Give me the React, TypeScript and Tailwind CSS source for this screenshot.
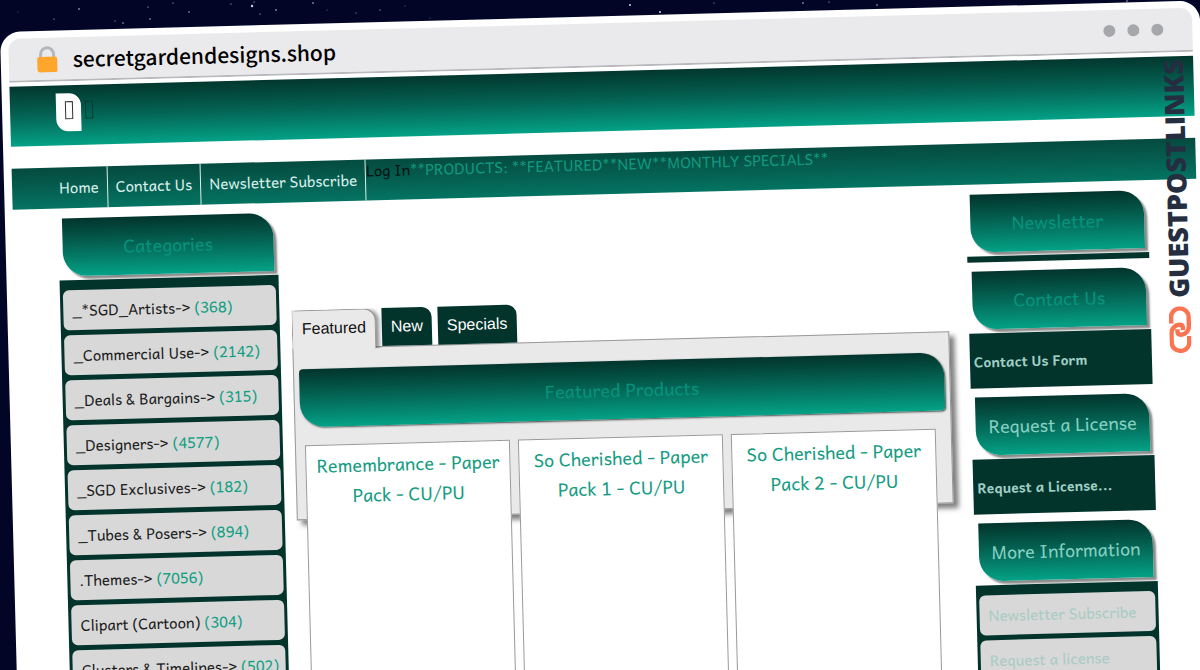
import React from "react";

const banner =
  "flex items-center justify-center bg-linear-to-b from-[#02342c] via-[#046857] to-[#03a287]";
const leafBox = `${banner} h-[58px] rounded-tr-3xl rounded-bl-3xl text-lg shadow-[3px_3px_2px_rgba(60,60,60,0.6)]`;

const categories: [string, number][] = [
  ["_*SGD_Artists->", 368],
  ["_Commercial Use->", 2142],
  ["_Deals & Bargains->", 315],
  ["_Designers->", 4577],
  ["_SGD Exclusives->", 182],
  ["_Tubes & Posers->", 894],
  [".Themes->", 7056],
  ["Clipart (Cartoon)", 304],
  ["Clusters & Timelines->", 502],
];

const products = [
  "Remembrance - Paper Pack - CU/PU",
  "So Cherished - Paper Pack 1 - CU/PU",
  "So Cherished - Paper Pack 2 - CU/PU",
];

const stars: [number, number, number][] = [
  [79, 9, 0.8], [54, 19, 0.6], [115, 21, 0.5], [123, 23, 0.7], [150, 19, 0.7], [148, 7, 0.6],
  [173, 3, 0.6], [189, 12, 0.7], [231, 4, 0.6], [252, 6, 1.2], [254, 2, 0.6], [260, 14, 0.6],
  [276, 10, 0.8], [313, 3, 0.8], [327, 10, 0.4], [356, 13, 0.5], [380, 10, 0.6], [405, 6, 0.4],
  [430, 18, 0.4], [630, 5, 1], [660, 12, 1], [714, 3, 0.5], [803, 3, 0.8], [829, 2, 0.6],
  [877, 5, 0.7], [1127, 1, 0.7], [18, 12, 0.4],
];

function Lock() {
  return (
    <svg viewBox="0 0 21 27" className="h-[27px] w-[21px]" aria-hidden="true">
      <path d="M4 13V8.5a6.5 6.5 0 0 1 13 0V13" fill="none" stroke="#b4b8bd" strokeWidth="3" />
      <rect x="0.5" y="11" width="20" height="15.5" rx="2.5" fill="#fda62b" />
    </svg>
  );
}

function ChainLink() {
  const half = "M2.2 17V10.800a8.800 8.600 0 0 1 17.600 0V20c0 5-4 8.500-8 8.500q-3.600 0-3.600-3.300V23";
  return (
    <svg viewBox="0 0 22 47" className="h-[47px] w-[22px]" fill="none" stroke="#fb7350" strokeWidth="4.400" aria-hidden="true">
      <path d={half} />
      <path d={half} transform="rotate(180 11 23.5)" />
    </svg>
  );
}

function Window() {
  return (
    <div className="relative w-full origin-top-left -rotate-[1.5deg] rounded-t-[20px] bg-white px-2 pt-[7px]">
      <div className="mb-1 flex h-[44px] items-center rounded-t-xl border-b-2 border-[#b9b9bd] bg-[#eaeaec] pr-[29px] pl-7">
        <Lock />
        <span className="ml-[15px] font-['Noto_Sans_CJK_SC',sans-serif] text-[21px] leading-8 font-medium text-black">
          secretgardendesigns.shop
        </span>
        <div className="ml-auto flex gap-3">
          <span className="size-3 rounded-full bg-[#a6a7aa]" />
          <span className="size-3 rounded-full bg-[#a6a7aa]" />
          <span className="size-3 rounded-full bg-[#a6a7aa]" />
        </div>
      </div>

      <header className="flex h-[60px] items-start bg-linear-to-b from-[#02372e] via-[#046555] to-[#03a287] pt-2 pl-[46px]">
        <a href="#" aria-label="Home page" className="flex h-[38px] w-[25px] items-center justify-center rounded-tr-xl rounded-bl-xl bg-white">
          <span className="mb-1 h-[18px] w-2 border border-[#333]" />
        </a>
        <a href="#" aria-label="Search" className="mt-2 ml-1 h-[18px] w-2 border border-[#033f35]" />
      </header>

      <nav className="mt-[22px] flex h-[41px] items-stretch bg-linear-to-b from-[#054a3f] to-[#047462] pl-[39px] text-[15px] font-medium text-[#d9efeb]">
        <a href="#" className="flex items-center border-r border-[#d9efeb] px-2">Home</a>
        <a href="#" className="flex items-center border-r border-[#d9efeb] px-2">Contact Us</a>
        <a href="#" className="flex items-center border-r border-[#d9efeb] px-2">Newsletter Subscribe</a>
        <div className="whitespace-nowrap text-[#119a80]">
          <a href="#" className="text-[#03130f]">Log In</a>
          <span className="font-normal">**PRODUCTS: **FEATURED**NEW**MONTHLY SPECIALS**</span>
        </div>
      </nav>

      <div className="flex items-start pt-[10px] pr-[49px] pl-[45px]">
        <aside className="w-[219px] shrink-0">
          <h2 className={`${leafBox} mx-1 text-[#07937b]`}>Categories</h2>
          <ul className="mt-1 flex flex-col gap-[5px] bg-[#03342c] px-[3px] py-[10px]">
            {categories.map(([name, count]) => (
              <li key={name} className="flex h-10 items-center rounded-md bg-[#d8d8d8] px-[9px] text-[15px] font-medium whitespace-nowrap text-[#1c1c1c]">
                <a href="#">
                  {name} <span className="font-normal text-[#12a084]">({count})</span>
                </a>
              </li>
            ))}
          </ul>
        </aside>

        <main className="mt-[98px] ml-[12px] min-w-0 flex-1">
          <div role="tablist" className="flex h-[38px] items-start gap-[6px] font-['Liberation_Sans',sans-serif] text-base">
            <button role="tab" aria-selected="true" className="relative z-10 h-[42px] rounded-tr-xl border border-b-0 border-[#999] bg-[#e9e9e9] px-[9px] pb-[6px] text-[#111] shadow-[4px_0_4px_-1px_rgba(0,0,0,0.45)] [clip-path:inset(0_-10px_2px_0)]">Featured</button>
            <button role="tab" aria-selected="false" className="h-[38px] rounded-tr-[10px] bg-[#03342c] px-[9px] text-white">New</button>
            <button role="tab" aria-selected="false" className="h-[38px] rounded-tr-[10px] bg-[#03342c] px-[9px] text-white">Specials</button>
          </div>
          <section className="h-[172px] border border-[#999] bg-[#e9e9e9] px-[5px] pt-5 shadow-[5px_5px_5px_rgba(0,0,0,0.5)]">
            <h2 className={`${banner} h-[58px] rounded-[4px_24px_4px_24px] text-lg text-[#07937b] shadow-[1px_1px_2px_rgba(0,0,0,0.7)]`}>
              Featured Products
            </h2>
            <div className="mt-[18px] mr-[10px] ml-1 grid grid-cols-3 gap-2">
              {products.map((name) => (
                <article key={name} className="h-[330px] border border-[#999] bg-white px-1 pt-[5px] text-center text-lg leading-[30px] text-[#169c82]">
                  <a href="#">{name}</a>
                </article>
              ))}
            </div>
          </section>
        </main>

        <aside className="ml-5 w-[182px] shrink-0">
          <h2 className={`${leafBox} mx-1 text-[#07937b]`}>Newsletter</h2>
          <div className="mt-1 mb-[9px] h-[6px] bg-[#03342c]" />
          <h2 className={`${leafBox} mx-1 text-[#07937b]`}>Contact Us</h2>
          <div className="mt-1 mb-[9px] flex h-[55px] items-center bg-[#03342c] px-1 text-sm font-semibold text-[#9fcfc5]">
            <a href="#">Contact Us Form</a>
          </div>
          <h2 className={`${leafBox} mx-1 text-[#86d0c2]`}>Request a License</h2>
          <div className="mt-1 mb-[9px] flex h-[55px] items-center bg-[#03342c] px-1 text-sm font-semibold text-[#9fcfc5]">
            <a href="#">Request a License...</a>
          </div>
          <h2 className={`${leafBox} mx-1 text-[#86d0c2]`}>More Information</h2>
          <ul className="mt-1 flex flex-col gap-[5px] bg-[#03342c] px-[3px] py-[10px]">
            {["Newsletter Subscribe", "Request a license"].map((name) => (
              <li key={name} className="flex h-10 items-center rounded-md bg-[#d8d8d8] px-[9px] text-[15px] font-medium text-[#a9cbc4]">
                <a href="#">{name}</a>
              </li>
            ))}
          </ul>
        </aside>
      </div>

      <div className="absolute top-[58px] right-[16px] flex flex-col items-center gap-2">
        <span className="rotate-180 font-['Open_Sans',sans-serif] text-[27px] leading-6 font-extrabold text-[#252e40] [writing-mode:vertical-rl]">
          GUESTPOSTLINKS
        </span>
        <ChainLink />
      </div>
    </div>
  );
}

export default function App() {
  return (
    <div className="relative h-screen overflow-hidden bg-[#030526] pt-8 font-['Andika','Noto_Sans',sans-serif]">
      <svg className="absolute inset-x-0 top-0 h-8 w-full" aria-hidden="true">
        {stars.map(([x, y, r]) => (
          <circle key={`${x}-${y}`} cx={x} cy={y} r={r} fill="#cfd6ee" />
        ))}
      </svg>
      <Window />
    </div>
  );
}
